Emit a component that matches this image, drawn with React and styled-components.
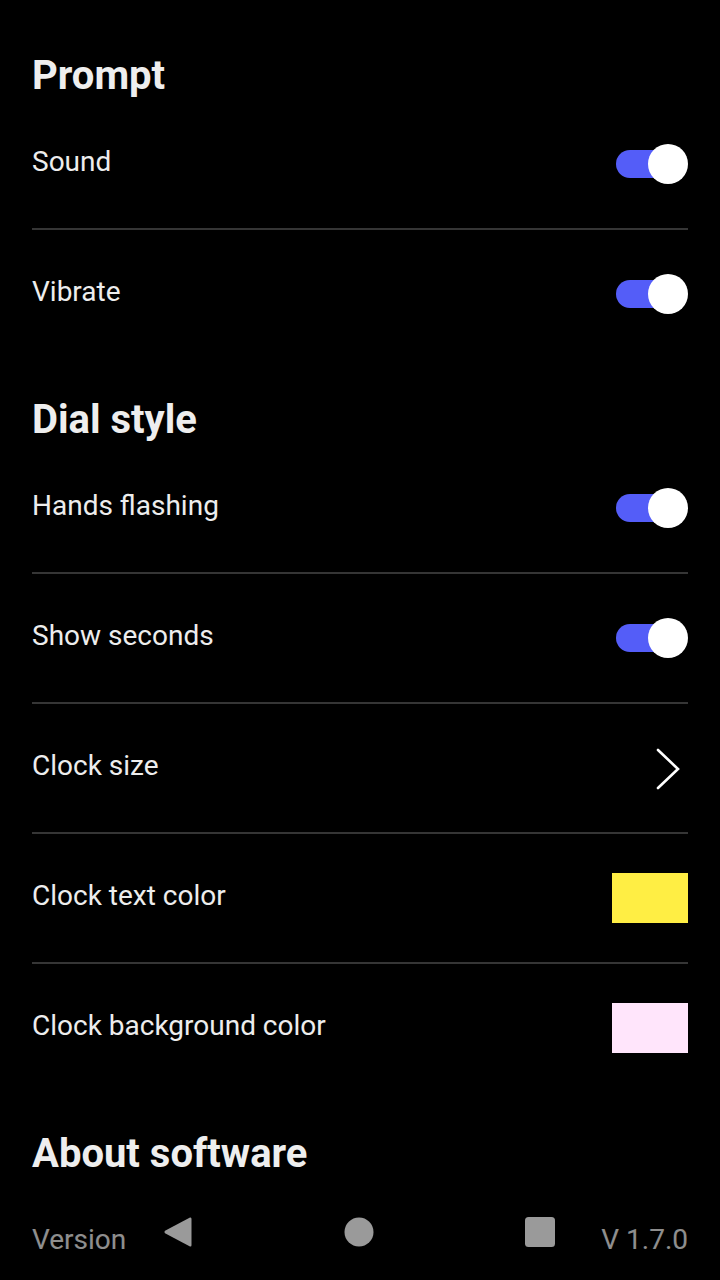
import React from "react";
import styled, { createGlobalStyle } from "styled-components";

const Global = createGlobalStyle`
  html, body {
    margin: 0;
    padding: 0;
    background: #000;
  }
  body {
    font-family: Roboto, "Noto Sans", "Liberation Sans", sans-serif;
    color: #ededed;
    overflow: hidden;
  }
`;

const Page = styled.div`
  width: 720px;
  height: 1280px;
  background: #000;
  position: relative;
  overflow: hidden;
  padding: 16px 32px 0;
  box-sizing: border-box;
`;

const Section = styled.section`
  display: flex;
  flex-direction: column;
`;

const Heading = styled.h2`
  margin: 0;
  height: 84px;
  box-sizing: border-box;
  padding-top: 38px;
  font-size: 40px;
  line-height: 44px;
  font-weight: 700;
  color: #eeeeee;
  letter-spacing: 0;
`;

const Row = styled.div`
  height: 128px;
  display: flex;
  align-items: center;
  justify-content: space-between;
  border-bottom: 2px solid ${(p) => (p.$last ? "transparent" : "#353535")};
`;

const Label = styled.span`
  font-size: 28px;
  line-height: 32px;
  color: ${(p) => (p.$muted ? "#8a8a8a" : "#ededed")};
  margin-top: -4px;
`;

const Switch = styled.div`
  display: flex;
  align-items: center;
  width: 72px;
  height: 40px;
`;

const Track = styled.div`
  width: 56px;
  height: 28px;
  border-radius: 14px;
  background: #545df8;
  flex-shrink: 0;
`;

const Knob = styled.div`
  width: 40px;
  height: 40px;
  border-radius: 50%;
  background: #ffffff;
  margin-left: -24px;
  flex-shrink: 0;
`;

const Swatch = styled.div`
  width: 76px;
  height: 50px;
  background: ${(p) => p.$color};
`;

const Chevron = styled.svg`
  width: 28px;
  height: 48px;
  margin-right: 6px;
  margin-top: 2px;
`;

const NavBar = styled.div`
  position: absolute;
  left: 0;
  right: 0;
  bottom: 0;
  height: 96px;
  background: rgba(0, 0, 0, 0.4);
  display: flex;
  align-items: center;
  justify-content: space-between;
  padding: 0 165px 0 163px;
  box-sizing: border-box;
`;

const NavIcon = styled.svg`
  width: 30px;
  height: 32px;
`;

const Toggle = () => (
  <Switch>
    <Track />
    <Knob />
  </Switch>
);

const Arrow = () => (
  <Chevron viewBox="0 0 28 48">
    <polyline
      points="4,5 24,24 4,43"
      fill="none"
      stroke="#ffffff"
      strokeWidth="2.6"
      strokeLinecap="round"
      strokeLinejoin="miter"
    />
  </Chevron>
);

export default function App() {
  return (
    <>
      <Global />
      <Page>
        <Section>
          <Heading>Prompt</Heading>
          <Row>
            <Label>Sound</Label>
            <Toggle />
          </Row>
          <Row $last>
            <Label>Vibrate</Label>
            <Toggle />
          </Row>
        </Section>
        <Section>
          <Heading>Dial style</Heading>
          <Row>
            <Label>Hands flashing</Label>
            <Toggle />
          </Row>
          <Row>
            <Label>Show seconds</Label>
            <Toggle />
          </Row>
          <Row>
            <Label>Clock size</Label>
            <Arrow />
          </Row>
          <Row>
            <Label>Clock text color</Label>
            <Swatch $color="#ffee44" />
          </Row>
          <Row $last>
            <Label>Clock background color</Label>
            <Swatch $color="#ffe5fb" />
          </Row>
        </Section>
        <Section>
          <Heading>About software</Heading>
          <Row $last>
            <Label>Version</Label>
            <Label>V 1.7.0</Label>
          </Row>
        </Section>
        <NavBar>
          <NavIcon viewBox="0 0 30 32">
            <path
              d="M27 1.5 Q28.5 1 28.5 3 L28.5 29 Q28.5 31 27 30.5 L2 17.2 Q0.8 16 2 14.8 Z"
              fill="#9a9a9a"
            />
          </NavIcon>
          <NavIcon viewBox="0 0 30 32">
            <circle cx="15" cy="16" r="14.5" fill="#9a9a9a" />
          </NavIcon>
          <NavIcon viewBox="0 0 30 32">
            <rect x="0" y="1" width="30" height="30" rx="3.5" fill="#9a9a9a" />
          </NavIcon>
        </NavBar>
      </Page>
    </>
  );
}
